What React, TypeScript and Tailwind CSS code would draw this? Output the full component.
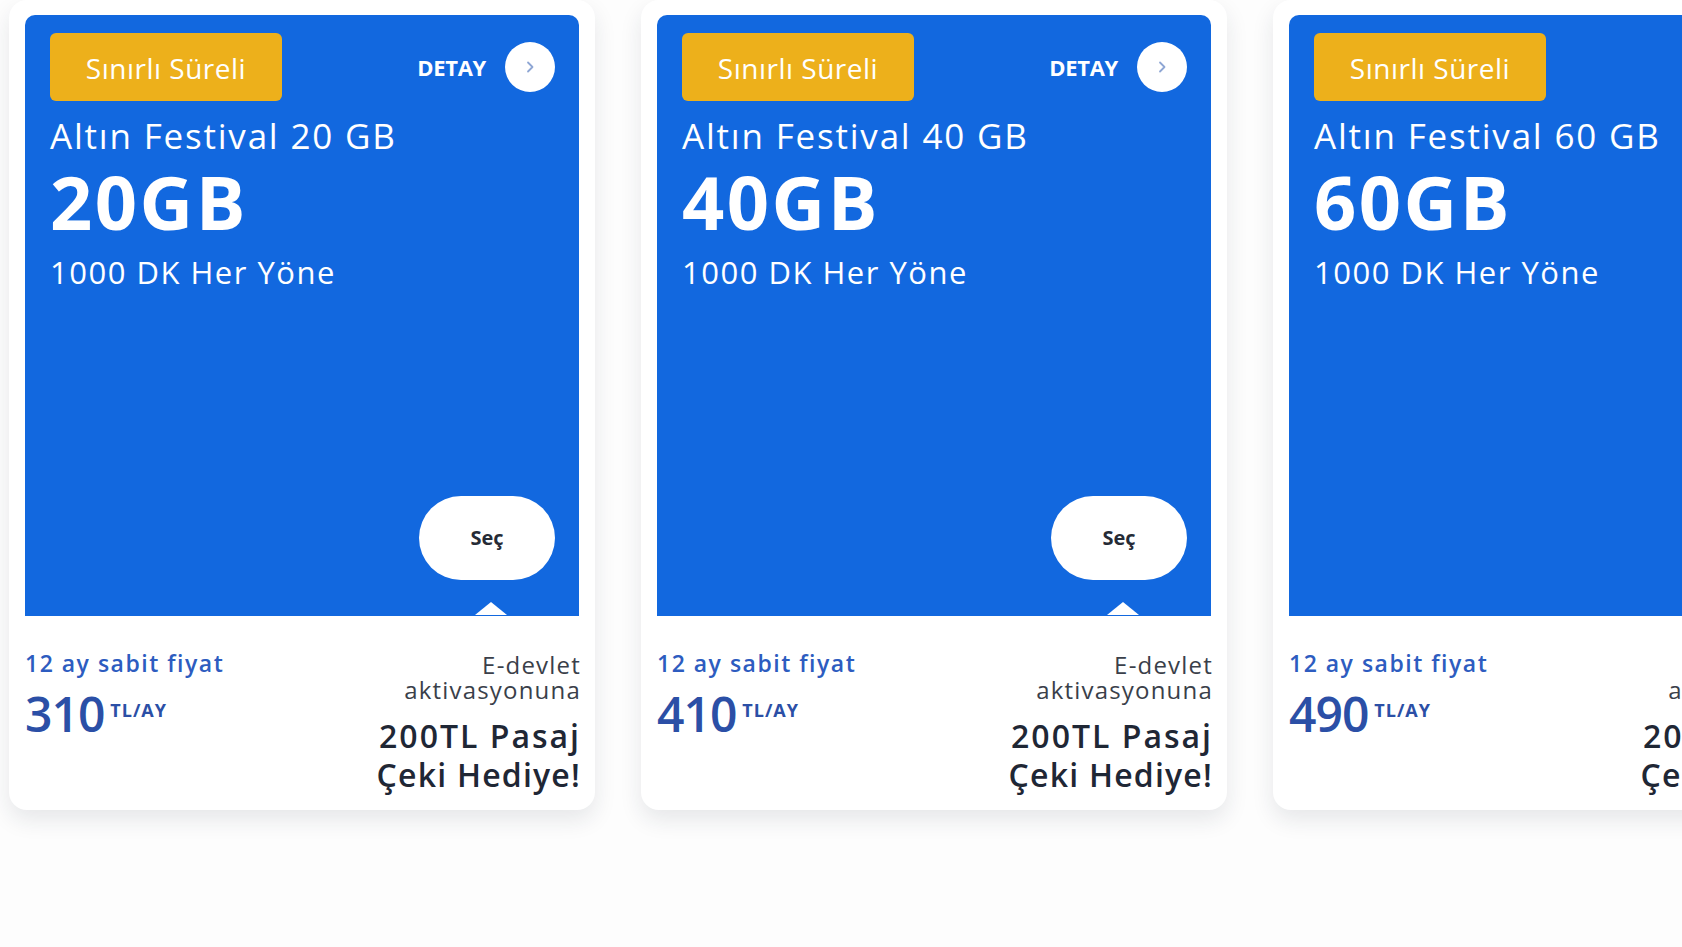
const plans = [
  { name: "Altın Festival 20 GB", gb: "20GB", price: "310" },
  { name: "Altın Festival 40 GB", gb: "40GB", price: "410" },
  { name: "Altın Festival 60 GB", gb: "60GB", price: "490" },
];

type Plan = (typeof plans)[number];

const PlanCard = ({ plan }: { plan: Plan }) => {
  return (
    <div className="w-[586px] shrink-0 rounded-[18px] bg-white px-4 pt-[15px] pb-[16px] shadow-[0_10px_22px_rgba(30,40,60,0.1)]">
      <div className="flex h-[601px] flex-col rounded-t-[10px] bg-[#1268df] pt-[18px] pr-[24px] pb-[36px] pl-[25px] text-white">
        <div className="flex items-center justify-between">
          <span className="flex h-[68px] w-[232px] items-center justify-center rounded-[6px] bg-[#edb01b] pt-[2px] text-[28px] tracking-[0.5px]">
            Sınırlı Süreli
          </span>
          <div className="flex items-center gap-[19px]">
            <span className="text-[22px] font-bold tracking-[-0.3px]">DETAY</span>
            <span className="flex h-[50px] w-[50px] items-center justify-center rounded-full bg-white">
              <svg width="10" height="14" viewBox="0 0 10 14" fill="none">
                <path d="M3 2.5 7.5 7 3 11.5" stroke="#8ea6d4" strokeWidth="1.8" strokeLinecap="round" strokeLinejoin="round" />
              </svg>
            </span>
          </div>
        </div>
        <h3 className="mt-[14px] text-[35px] leading-[42px] tracking-[1.8px]">{plan.name}</h3>
        <p className="mt-[5px] text-[74px] leading-[80px] font-bold tracking-[2.5px]">{plan.gb}</p>
        <p className="mt-[11px] text-[31px] leading-[38px] tracking-[1.5px]">1000 DK Her Yöne</p>
        {/* select button + notch pointing into the bottom panel */}
        <div className="mt-auto flex justify-end">
          <div className="relative">
            <button className="h-[84px] w-[136px] rounded-full bg-white text-[20px] font-bold text-[#262b36]">
              Seç
            </button>
            <span className="absolute top-[106px] left-[56px] h-0 w-0 border-x-[16px] border-b-[13px] border-x-transparent border-b-white" />
          </div>
        </div>
      </div>
      <div className="flex items-start justify-between pt-[33px]">
        <div className="flex flex-col">
          <span className="text-[23px] leading-[28px] font-semibold tracking-[1.5px] text-[#2d5cc0]">12 ay sabit fiyat</span>
          <div className="mt-[10px] flex items-start gap-[6px] text-[#2b4fa6]">
            <span className="text-[48px] leading-[54px] font-semibold tracking-[-1px]">{plan.price}</span>
            <span className="mt-[11px] text-[18px] leading-[24px] font-bold tracking-[1px]">TL/AY</span>
          </div>
        </div>
        <div className="mt-[3px] mr-[-2px] flex flex-col items-end text-right">
          <span className="text-[24px] leading-[25px] tracking-[1.2px] text-[#3a3f4a]">E-devlet</span>
          <span className="text-[24px] leading-[25px] tracking-[1.2px] text-[#3a3f4a]">aktivasyonuna</span>
          <span className="mt-[14px] text-[32px] leading-[39px] font-semibold tracking-[2px] text-[#1f2735]">200TL Pasaj</span>
          <span className="text-[32px] leading-[39px] font-semibold tracking-[1.2px] text-[#1f2735]">Çeki Hediye!</span>
        </div>
      </div>
    </div>
  );
};

export default function App() {
  return (
    <div className="h-[947px] w-full overflow-hidden bg-[#fdfdfd] font-['Open_Sans',sans-serif]">
      <div className="flex gap-[46px] pl-[9px]">
        {plans.map((p) => (
          <PlanCard key={p.gb} plan={p} />
        ))}
      </div>
    </div>
  );
}
